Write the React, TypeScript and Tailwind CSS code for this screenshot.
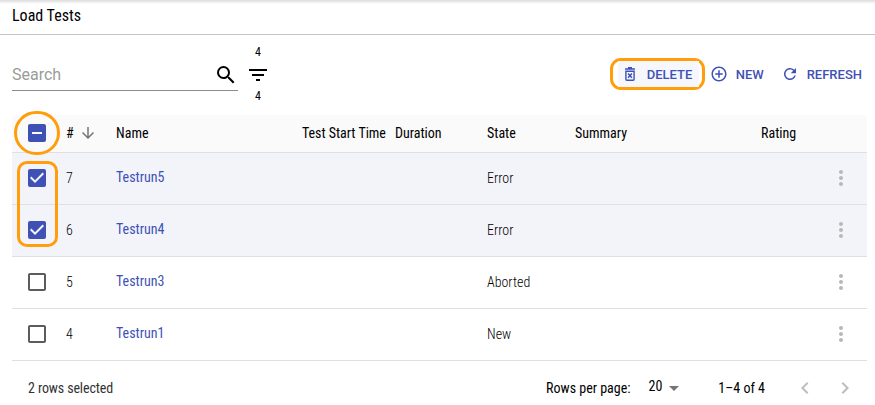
import React from "react";
import {
  MdSearch,
  MdFilterList,
  MdAddCircleOutline,
  MdRefresh,
  MdArrowDownward,
  MdMoreVert,
  MdArrowDropDown,
  MdChevronLeft,
  MdChevronRight,
  MdCheckBox,
  MdIndeterminateCheckBox,
  MdCheckBoxOutlineBlank,
} from "react-icons/md";

const rows = [
  { id: 7, name: "Testrun5", state: "Error", selected: true },
  { id: 6, name: "Testrun4", state: "Error", selected: true },
  { id: 5, name: "Testrun3", state: "Aborted", selected: false },
  { id: 4, name: "Testrun1", state: "New", selected: false },
];

const grid =
  "grid grid-cols-[54px_50px_186px_93px_92px_88px_186px_68px_38px] items-center pb-0.5";

function DeleteIcon() {
  return (
    <svg viewBox="0 0 18 18" className="size-[18px]" fill="none" stroke="currentColor">
      <path d="M4 4h10M7 2.7h4" strokeWidth="1.5" />
      <path d="M4.9 6.2h8.2v8.1q0 .9-.9.9H5.8q-.9 0-.9-.9z" strokeWidth="1.4" />
      <path d="M7.1 8.6l3.8 4.2M10.9 8.6l-3.8 4.2" strokeWidth="1.5" />
    </svg>
  );
}

export default function App() {
  return (
    <div className="flex h-[405px] w-[875px] flex-col overflow-hidden bg-white font-['Roboto_Condensed','Roboto',sans-serif] text-[14px] leading-5 text-black [font-stretch:75%]">
      <header className="flex h-[35px] items-center border-b border-[#c4c4c4] bg-[linear-gradient(#dcdcdc,#fff_4px)] pb-[3px] pl-3 text-[16px]">
        Load Tests
      </header>

      <div className="flex h-20 pl-3 pr-[13px]">
        <div className="mt-[25px] flex h-[31px] w-[226px] items-center border-b border-[#8c8c8c] text-[16px] text-[#9b9b9b]">
          <span className="flex-1 font-['Roboto',sans-serif] [font-stretch:100%]">Search</span>
          <MdSearch className="size-6 text-black" />
        </div>
        <div className="ml-2 flex w-6 flex-col items-center pt-[9px] text-[12px] leading-4">
          <span>4</span>
          <MdFilterList className="mt-[3px] mb-px size-6" />
          <span>4</span>
        </div>
        <div className="ml-auto mt-[23px] flex h-8 items-center text-[13px] font-medium text-[#3f51b5] [font-stretch:100%] font-['Roboto',sans-serif]">
          <div className="flex h-8 w-[95px] rounded-[11px] border-[3.5px] border-[#ff9d0a] bg-white pl-[5px] pr-[3px]">
            <div className="flex flex-1 items-center bg-[#f5f7fc] pl-[3px]">
              <DeleteIcon />
              <span className="ml-[8px] pt-px">DELETE</span>
            </div>
          </div>
          <MdAddCircleOutline className="ml-[5px] size-[18px]" />
          <span className="ml-2 pt-px">NEW</span>
          <MdRefresh className="ml-[17px] size-[18px]" />
          <span className="ml-2 pt-px">REFRESH</span>
        </div>
      </div>

      <div className="relative mx-3 w-[855px]">
        <div className={`${grid} h-[38px] rounded-t border-b border-[#e0e0e0] bg-[#fafafa]`}>
          <MdIndeterminateCheckBox className="ml-[13px] size-6 text-[#3f51b5]" />
          <div className="flex items-center gap-[5px]">
            #
            <MdArrowDownward className="size-[18px] text-[#757575]" />
          </div>
          <span>Name</span>
          <span className="tracking-[-0.03px]">Test Start Time</span>
          <span>Duration</span>
          <span>State</span>
          <span>Summary</span>
          <span>Rating</span>
        </div>
        {rows.map((r) => (
          <div
            key={r.id}
            className={`${grid} h-[52px] border-b border-[#e0e0e0] font-light ${r.selected ? "bg-[#f3f4fa]" : "bg-white"}`}
          >
            {r.selected ? (
              <MdCheckBox className="ml-[13px] size-6 text-[#3f51b5]" />
            ) : (
              <MdCheckBoxOutlineBlank className="ml-[13px] size-6 text-[#5c5c5c]" />
            )}
            <span>{r.id}</span>
            <span className="pb-0.5 font-normal text-[#3f51b5]">{r.name}</span>
            <span />
            <span />
            <span>{r.state}</span>
            <span />
            <span />
            <MdMoreVert className="size-6 text-[#b8b8b8]" />
          </div>
        ))}
        <div className="absolute left-[1.5px] top-[-4px] h-[44px] w-[46px] rounded-full border-3 border-[#ff9d0a]" />
        <div className="absolute left-[5px] top-[46px] h-[86px] w-[41px] rounded-[10px] border-3 border-[#ff9d0a]" />
      </div>

      <footer className="flex h-11 items-center pl-7 pt-[10px]">
        <span className="tracking-[-0.12px] text-[#333]">2 rows selected</span>
        <span className="ml-auto">Rows per page:</span>
        <span className="ml-[18px] pb-1">20</span>
        <MdArrowDropDown className="size-6 text-[#757575]" />
        <span className="ml-8">1–4 of 4</span>
        <MdChevronLeft className="ml-7 size-6 text-[#bdbdbd]" />
        <MdChevronRight className="ml-4 mr-[18px] size-6 text-[#bdbdbd]" />
      </footer>
    </div>
  );
}
